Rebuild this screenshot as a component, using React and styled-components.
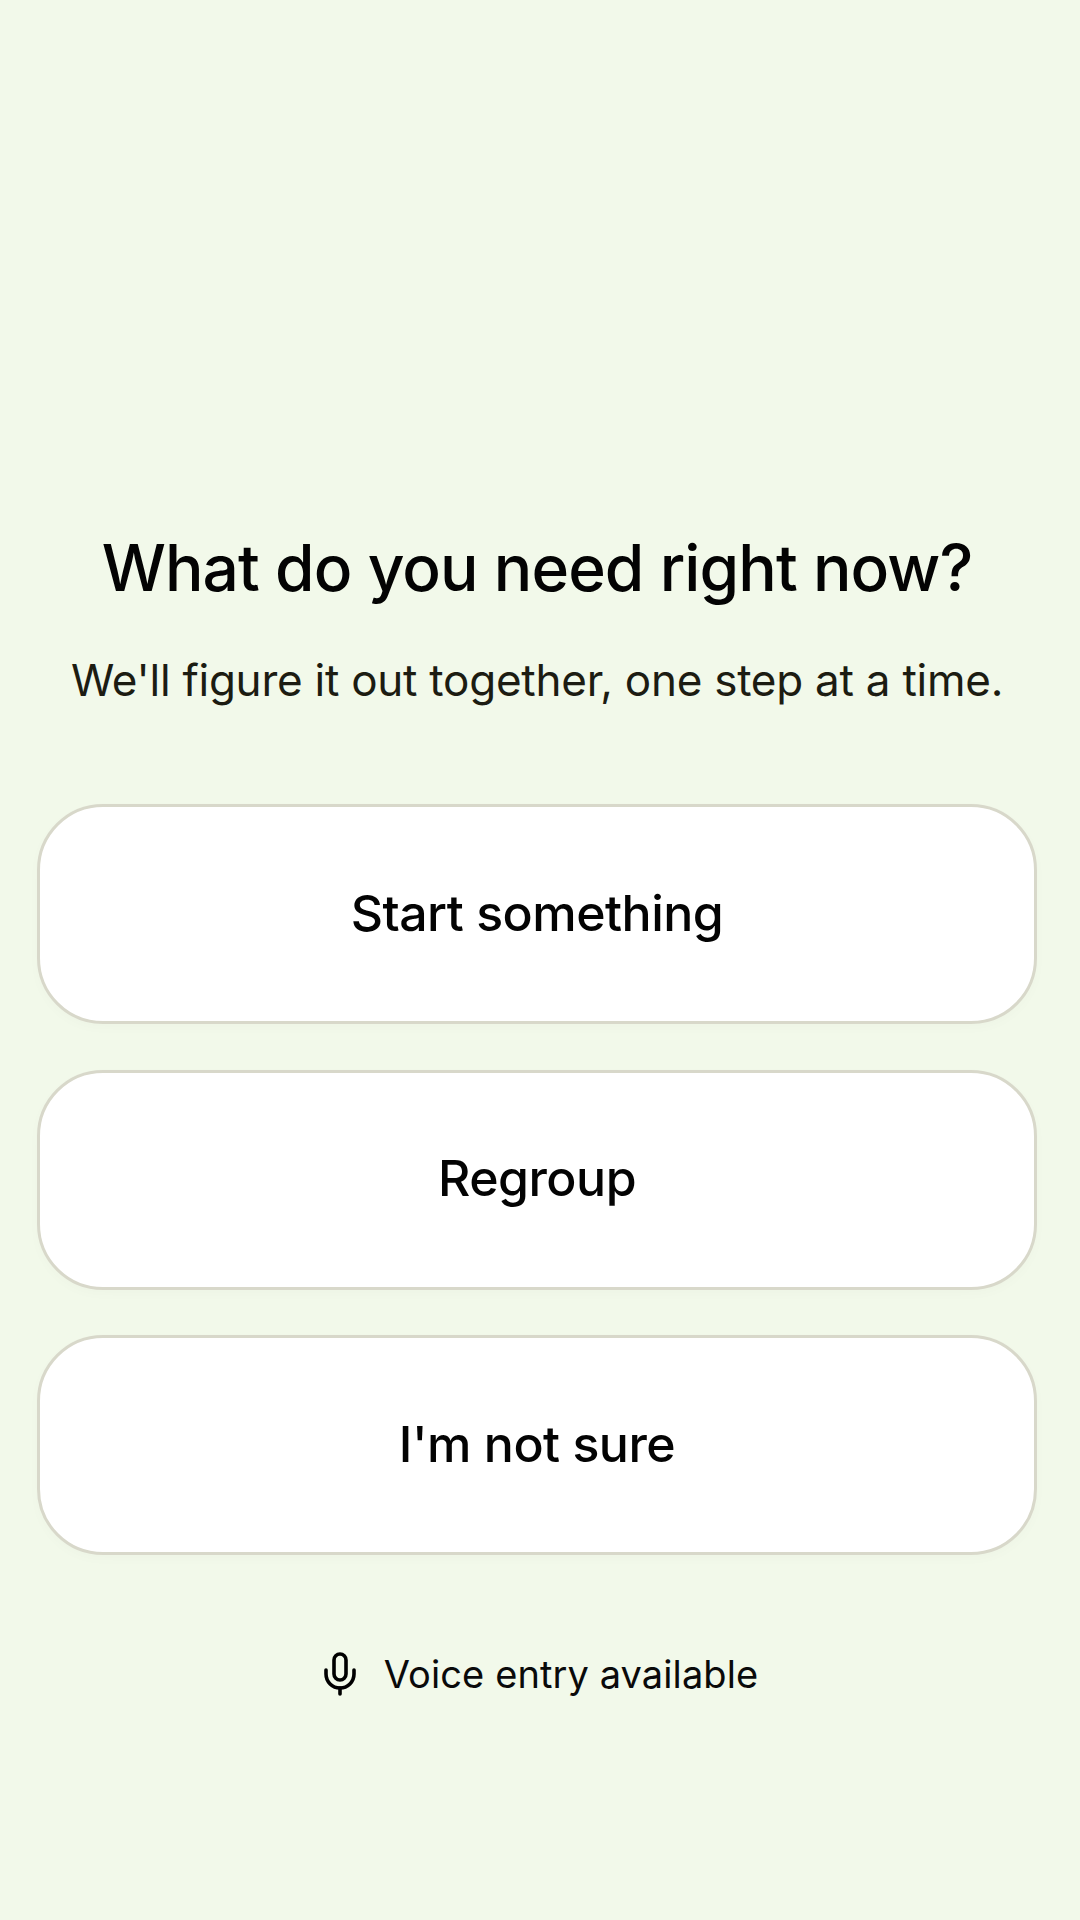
import { createGlobalStyle, styled } from "styled-components";
import { Mic } from "lucide-react";

const GlobalStyle = createGlobalStyle`
html, body {
    margin: 0;
    padding: 0;
    background: #f2f9ea;
}
`

const options = ["Start something", "Regroup", "I'm not sure"];

export default function App() {
    return (
        <PageDiv>
            <GlobalStyle />
            <HeaderDiv>
                <TitleH1>What do you need right now?</TitleH1>
                <SubtitleP>We'll figure it out together, one step at a time.</SubtitleP>
            </HeaderDiv>
            <OptionsDiv>
                {options.map((label) => (
                    <OptionButton key={label}>{label}</OptionButton>
                ))}
            </OptionsDiv>
            <VoiceDiv>
                <Mic size={48} strokeWidth={1.8} />
                <VoiceLabelSpan>Voice entry available</VoiceLabelSpan>
            </VoiceDiv>
        </PageDiv>
    )
}

const PageDiv = styled.div`
box-sizing: border-box;
width: 1080px;
height: 1920px;
padding: 526px 43px 0 37px;
display: flex;
flex-direction: column;
font-family: Inter, "Liberation Sans", sans-serif;
color: #000;
background: #f2f9ea;
overflow: hidden;
`

const HeaderDiv = styled.div`
display: flex;
flex-direction: column;
align-items: center;
gap: 42px;
`

const TitleH1 = styled.h1`
margin: 0;
font-size: 64px;
line-height: 84px;
font-weight: 500;
letter-spacing: -0.9px;
white-space: nowrap;
color: #030303;
`

const SubtitleP = styled.p`
margin: 0;
font-size: 44px;
line-height: 56px;
font-weight: 400;
letter-spacing: -0.25px;
white-space: nowrap;
color: #1c1c12;
`

const OptionsDiv = styled.div`
margin-top: 96px;
display: flex;
flex-direction: column;
gap: 45.5px;
`

const OptionButton = styled.button`
box-sizing: border-box;
height: 220px;
width: 100%;
padding: 0 0 3px;
border: 3px solid #d8d8ca;
border-radius: 66px;
background: #fff;
font-family: inherit;
font-size: 50px;
font-weight: 500;
letter-spacing: -0.5px;
color: #030303;
box-shadow: 0 4px 12px rgba(0, 0, 0, 0.02);
`

const VoiceDiv = styled.div`
margin-top: 92px;
display: flex;
align-items: center;
justify-content: center;
gap: 20px;
`

const VoiceLabelSpan = styled.span`
font-size: 38px;
line-height: 54px;
font-weight: 400;
letter-spacing: 0.1px;
color: #0a0a0a;
`
